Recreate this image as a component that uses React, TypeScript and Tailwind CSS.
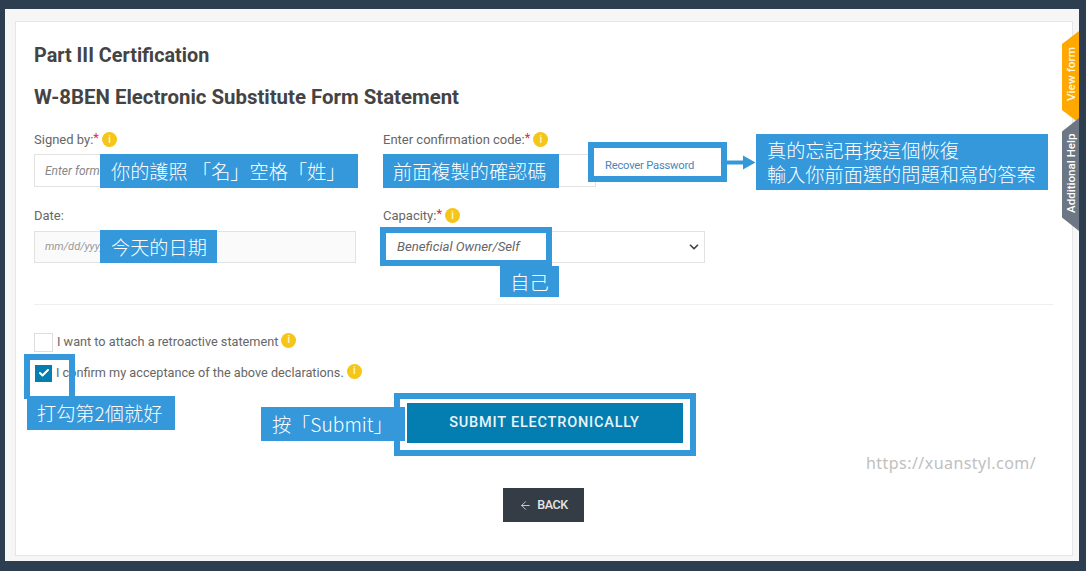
import React from 'react'
import { ArrowLeft, Check, ChevronDown } from 'lucide-react'

const sans = "font-['Roboto','Liberation_Sans',sans-serif]"

const InfoDot = ({ className = '' }: { className?: string }): React.ReactElement => (
  <span
    className={`inline-flex size-[15px] shrink-0 items-center justify-center rounded-full bg-[#f5c518] text-[10px] font-bold leading-none text-[#fdf3c4] ${className}`}
  >
    i
  </span>
)

const FieldLabel = ({ text, required }: { text: string; required?: boolean }): React.ReactElement => (
  <div className="flex h-[17px] items-center text-[13px] text-[#666]">
    <span>{text}</span>
    {required ? <span className="-mt-1 text-[#e02b3c]">*</span> : null}
    {required ? <InfoDot className="ml-[3px]" /> : null}
  </div>
)

const Note = ({ className, children }: { className: string; children: React.ReactNode }): React.ReactElement => (
  <div
    className={`absolute flex items-center whitespace-nowrap bg-[#3498db] text-[19.2px] font-light leading-[24px] text-white font-['Noto_Sans_CJK_TC',sans-serif] ${className}`}
  >
    {children}
  </div>
)

const Outline = ({ className }: { className: string }): React.ReactElement => (
  <div className={`absolute border-[6px] border-[#3498db] ${className}`} />
)

const App = (): React.ReactElement => {
  return (
    <div className={`relative h-[571px] w-[1086px] overflow-hidden bg-[#2c3e50] pb-[10px] pl-[5px] pr-[7px] pt-[9px] ${sans}`}>
      <div className="h-full bg-[#f6f6f6] pb-[5px] pl-[10px] pr-[6px] pt-[12px]">
        <div className="h-full border border-[#e6e6e6] bg-white pl-[18px] pr-[19px] pt-[22px]">
          <h1 className="text-[19.8px] font-bold leading-[24px] text-[#444]">Part III Certification</h1>
          <h2 className="mt-[17px] text-[20.4px] font-bold leading-[24px] text-[#444]">
            W-8BEN Electronic Substitute Form Statement
          </h2>

          <div className="mt-[22px] flex">
            <div className="w-[349px]">
              <FieldLabel text="Signed by:" required />
              <div className="mt-[6px] flex h-[33px] w-[322px] items-center border border-[#e2e2e2] pl-[10px] text-[12px] italic text-[#888]">
                Enter form
              </div>
              <div className="mt-[20px]">
                <FieldLabel text="Date:" />
              </div>
              <div className="mt-[7px] flex h-[32px] w-[322px] items-center border border-[#e2e2e2] bg-[#fafafa] pl-[10px] text-[11px] italic text-[#999]">
                mm/dd/yyyy
              </div>
            </div>
            <div className="w-[322px]">
              <FieldLabel text="Enter confirmation code:" required />
              <div className="mt-[6px] h-[33px] w-[213px] border border-[#e2e2e2]" />
              <div className="mt-[20px]">
                <FieldLabel text="Capacity:" required />
              </div>
              <div className="mt-[7px] flex h-[32px] items-center justify-end border border-[#e2e2e2] pr-[3px] text-[#444]">
                <ChevronDown size={14} strokeWidth={3} />
              </div>
            </div>
          </div>

          <div className="mt-[41px] h-px bg-[#eee]" />

          <div className="mt-[27px] flex h-[20px] items-center text-[12.7px] text-[#666]">
            <span className="size-[19px] border border-[#ddd]" />
            <span className="ml-[4px]">I want to attach a retroactive statement</span>
            <InfoDot className="-mt-1 ml-[3px]" />
          </div>
          <div className="mt-[11px] flex h-[20px] items-center text-[12.7px] text-[#666]">
            <span className="ml-px flex size-[17px] items-center justify-center bg-[#047eb0] text-white">
              <Check size={12} strokeWidth={4} />
            </span>
            <span className="ml-[4px]">I confirm my acceptance of the above declarations.</span>
            <InfoDot className="-mt-1 ml-[3px]" />
          </div>

          <div className="mt-[20px] flex justify-center pl-[2px]">
            <button
              type="button"
              className="h-[40px] w-[276px] bg-[#047eb0] text-[14.5px] font-medium tracking-[0.8px] text-[#e8f4fa]"
            >
              SUBMIT ELECTRONICALLY
            </button>
          </div>
          <div className="mt-[45px] flex justify-center">
            <button
              type="button"
              className="flex h-[34px] w-[81px] items-center justify-center gap-[5px] bg-[#343d46] text-[12.5px] font-medium tracking-[-0.4px] text-[#e6e6e6]"
            >
              <ArrowLeft size={13} strokeWidth={1.5} />
              BACK
            </button>
          </div>
        </div>
      </div>

      {/* side tabs */}
      <div className="absolute left-[1062px] top-[31px] h-[92px] w-[17px] bg-[#ffa800] [clip-path:polygon(100%_0,100%_100%,0_86%,0_14%)]" />
      <div className="absolute left-[1062px] top-[118px] h-[113px] w-[17px] bg-[#6c7783] [clip-path:polygon(100%_0,100%_100%,0_88%,0_12%)]" />
      <div className="absolute left-[1065px] top-[47px] flex h-[54px] w-[14px] rotate-180 items-center justify-center whitespace-nowrap text-[11.8px] font-medium text-[#fff6df] [writing-mode:vertical-rl]">
        View form
      </div>
      <div className="absolute left-[1065px] top-[133px] flex h-[80px] w-[14px] rotate-180 items-center justify-center whitespace-nowrap text-[11.6px] font-medium text-white [writing-mode:vertical-rl]">
        Additional Help
      </div>

      {/* annotations laid over the screenshot */}
      <Note className="left-[100px] top-[154px] h-[34px] w-[258px] pl-[11px]">你的護照 「名」空格「姓」</Note>
      <Note className="left-[383px] top-[154px] h-[34px] w-[176px] pl-[10px]">前面複製的確認碼</Note>

      <div className="absolute left-[588px] top-[142px] flex h-[40px] w-[139px] items-center border-[6px] border-[#3498db] bg-white pl-[11px] pt-[8px] text-[11.2px] tracking-[-0.2px] text-[#4a86b8]">
        Recover Password
      </div>
      <svg className="absolute left-[727px] top-[155px]" width="29" height="18" viewBox="0 0 29 18">
        <path d="M0 5.500h16V0.500L28.500 7.500 16 14.500V9.500H0z" fill="#3498db" />
      </svg>
      <Note className="left-[756px] top-[134px] h-[56px] w-[292px] pl-[11px]">
        <div>
          真的忘記再按這個恢復
          <br />
          輸入你前面選的問題和寫的答案
        </div>
      </Note>

      <Note className="left-[100px] top-[230px] h-[33px] w-[117px] pl-[11px]">今天的日期</Note>

      <div className="absolute left-[380px] top-[227px] flex h-[39px] w-[172px] items-center border-[6px] border-[#3498db] bg-white pl-[11px] text-[13.2px] italic text-[#666]">
        Beneficial Owner/Self
      </div>
      <Note className="left-[500px] top-[266px] h-[31px] w-[59px] justify-center">自己</Note>

      <Outline className="left-[24px] top-[354px] h-[45px] w-[51px] border-b-0" />
      <Note className="left-[27px] top-[396px] h-[34px] w-[148px] pl-[10px]">打勾第2個就好</Note>

      <Outline className="left-[394px] top-[393px] h-[63px] w-[302px]" />
      <Note className="left-[261px] top-[407px] h-[34px] w-[144px] pl-[11px]">按「Submit」</Note>

      <div className="absolute left-[866px] top-[451px] text-[16px] tracking-[0.45px] text-[#c0c0c0] font-['Noto_Sans',sans-serif]">
        https://xuanstyl.com/
      </div>
    </div>
  )
}

export default App
